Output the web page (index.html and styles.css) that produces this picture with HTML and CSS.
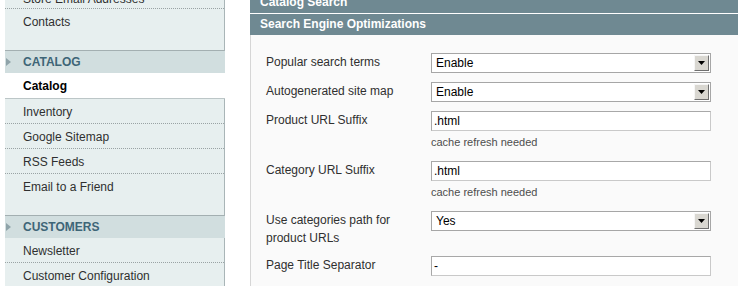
FILE: index.html
```html
<!DOCTYPE html>
<html lang="en">
<head>
    <meta charset="UTF-8">
    <title>Configuration - Catalog</title>
    <link rel="stylesheet" href="styles.css">
</head>
<body>
    <div class="page">
        <aside class="side">
            <ul class="tab-group">
                <li class="first">Store Email Addresses</li>
                <li>Contacts</li>
            </ul>

            <div class="tab-head">
                <svg class="tab-arrow" width="5" height="8" viewBox="0 0 5 8"><path d="M0 0L5 4L0 8z"/></svg>
                <span>Catalog</span>
            </div>
            <ul class="tab-group">
                <li class="active">Catalog</li>
                <li>Inventory</li>
                <li>Google Sitemap</li>
                <li>RSS Feeds</li>
                <li>Email to a Friend</li>
            </ul>

            <div class="tab-head">
                <svg class="tab-arrow" width="5" height="8" viewBox="0 0 5 8"><path d="M0 0L5 4L0 8z"/></svg>
                <span>Customers</span>
            </div>
            <ul class="tab-group">
                <li>Newsletter</li>
                <li>Customer Configuration</li>
            </ul>
        </aside>

        <main class="content">
            <div class="section-head">Catalog Search</div>
            <div class="section-head">Search Engine Optimizations</div>

            <div class="fieldset">
                <div class="form-row">
                    <label>Popular search terms</label>
                    <div class="control">
                        <div class="select">
                            <span class="select-value">Enable</span>
                            <span class="select-btn"><svg width="7" height="4" viewBox="0 0 7 4"><path d="M0 0H7L3.5 4z"/></svg></span>
                        </div>
                    </div>
                </div>

                <div class="form-row">
                    <label>Autogenerated site map</label>
                    <div class="control">
                        <div class="select">
                            <span class="select-value">Enable</span>
                            <span class="select-btn"><svg width="7" height="4" viewBox="0 0 7 4"><path d="M0 0H7L3.5 4z"/></svg></span>
                        </div>
                    </div>
                </div>

                <div class="form-row">
                    <label>Product URL Suffix</label>
                    <div class="control">
                        <div class="input-text">.html</div>
                        <p class="note">cache refresh needed</p>
                    </div>
                </div>

                <div class="form-row">
                    <label>Category URL Suffix</label>
                    <div class="control">
                        <div class="input-text">.html</div>
                        <p class="note">cache refresh needed</p>
                    </div>
                </div>

                <div class="form-row">
                    <label>Use categories path for product URLs</label>
                    <div class="control">
                        <div class="select">
                            <span class="select-value">Yes</span>
                            <span class="select-btn"><svg width="7" height="4" viewBox="0 0 7 4"><path d="M0 0H7L3.5 4z"/></svg></span>
                        </div>
                    </div>
                </div>

                <div class="form-row">
                    <label>Page Title Separator</label>
                    <div class="control">
                        <div class="input-text">-</div>
                    </div>
                </div>
            </div>
        </main>
    </div>
</body>
</html>
```

FILE: styles.css
```css
html, body {
    margin: 0;
    padding: 0;
    overflow: hidden;
}

body {
    font-family: "Liberation Sans", Arial, sans-serif;
    font-size: 12px;
    color: #2f2f2f;
    background: #fff;
}

.page {
    display: flex;
    align-items: flex-start;
    padding-left: 5px;
    width: 1000px;
}

/* left side tabs */
.side {
    width: 220px;
    margin-top: -16px;
}

.tab-group {
    list-style: none;
    margin: 0;
    padding: 0 0 17px 0;
    background: #e7efef;
    border-right: 1px solid #a9b5b7;
    border-bottom: 1px solid #a3afb1;
}

.tab-group li {
    height: 23px;
    line-height: 24px;
    padding-top: 1px;
    padding-left: 18px;
    border-bottom: 1px dotted #9aa3a4;
}

.tab-group li.first {
    height: 21px;
    padding-top: 3px;
}

.tab-group li:last-child {
    border-bottom: none;
}

.tab-group li.active {
    height: 24px;
    line-height: 25px;
    margin-right: -1px;
    background: #fff;
    font-weight: bold;
    color: #000;
    border-bottom: 1px solid #bcc6c7;
}

.tab-head {
    display: flex;
    align-items: center;
    height: 22px;
    padding-left: 1px;
    background: #d1dedf;
    color: #3e6577;
    font-weight: bold;
    text-transform: uppercase;
}

.tab-arrow {
    fill: #8fa3a9;
    margin-right: 12px;
}

/* main form */
.content {
    width: 600px;
    margin-left: 25px;
    margin-top: -8px;
}

.section-head {
    height: 21px;
    line-height: 21px;
    padding-left: 10px;
    margin-bottom: 1px;
    background: #6f8992;
    color: #fff;
    font-weight: bold;
}

.section-head + .section-head {
    margin-bottom: 0;
}

.fieldset {
    background: #fafafa;
    border-left: 1px solid #d6d6d6;
    padding: 18px 0 30px 15px;
    display: flex;
    flex-direction: column;
    gap: 9px;
}

.form-row {
    display: grid;
    grid-template-columns: 165px 280px;
    align-items: start;
}

.form-row label {
    line-height: 18px;
    padding-right: 15px;
    color: #2f2f2f;
}

.select {
    display: flex;
    align-items: center;
    box-sizing: border-box;
    height: 20px;
    background: #fff;
    border: 1px solid #a6a6a6;
    color: #000;
}

.select-value {
    flex: 1;
    padding-left: 4px;
}

.select-btn {
    display: flex;
    align-items: center;
    justify-content: center;
    box-sizing: border-box;
    width: 15px;
    height: 16px;
    margin-right: 1px;
    background: #d9d7d1;
    border: 1px solid;
    border-color: #f6f6f6 #6f6f6f #6f6f6f #f6f6f6;
}

.input-text {
    box-sizing: border-box;
    height: 20px;
    line-height: 18px;
    padding-left: 2px;
    background: #fff;
    border: 1px solid;
    border-color: #a8a8a8 #c9c9c9 #c9c9c9 #a8a8a8;
    color: #000;
}

.note {
    margin: 0;
    padding: 3px 0 2px 0;
    line-height: 16px;
    font-size: 11px;
    color: #4d4d4d;
}
```
